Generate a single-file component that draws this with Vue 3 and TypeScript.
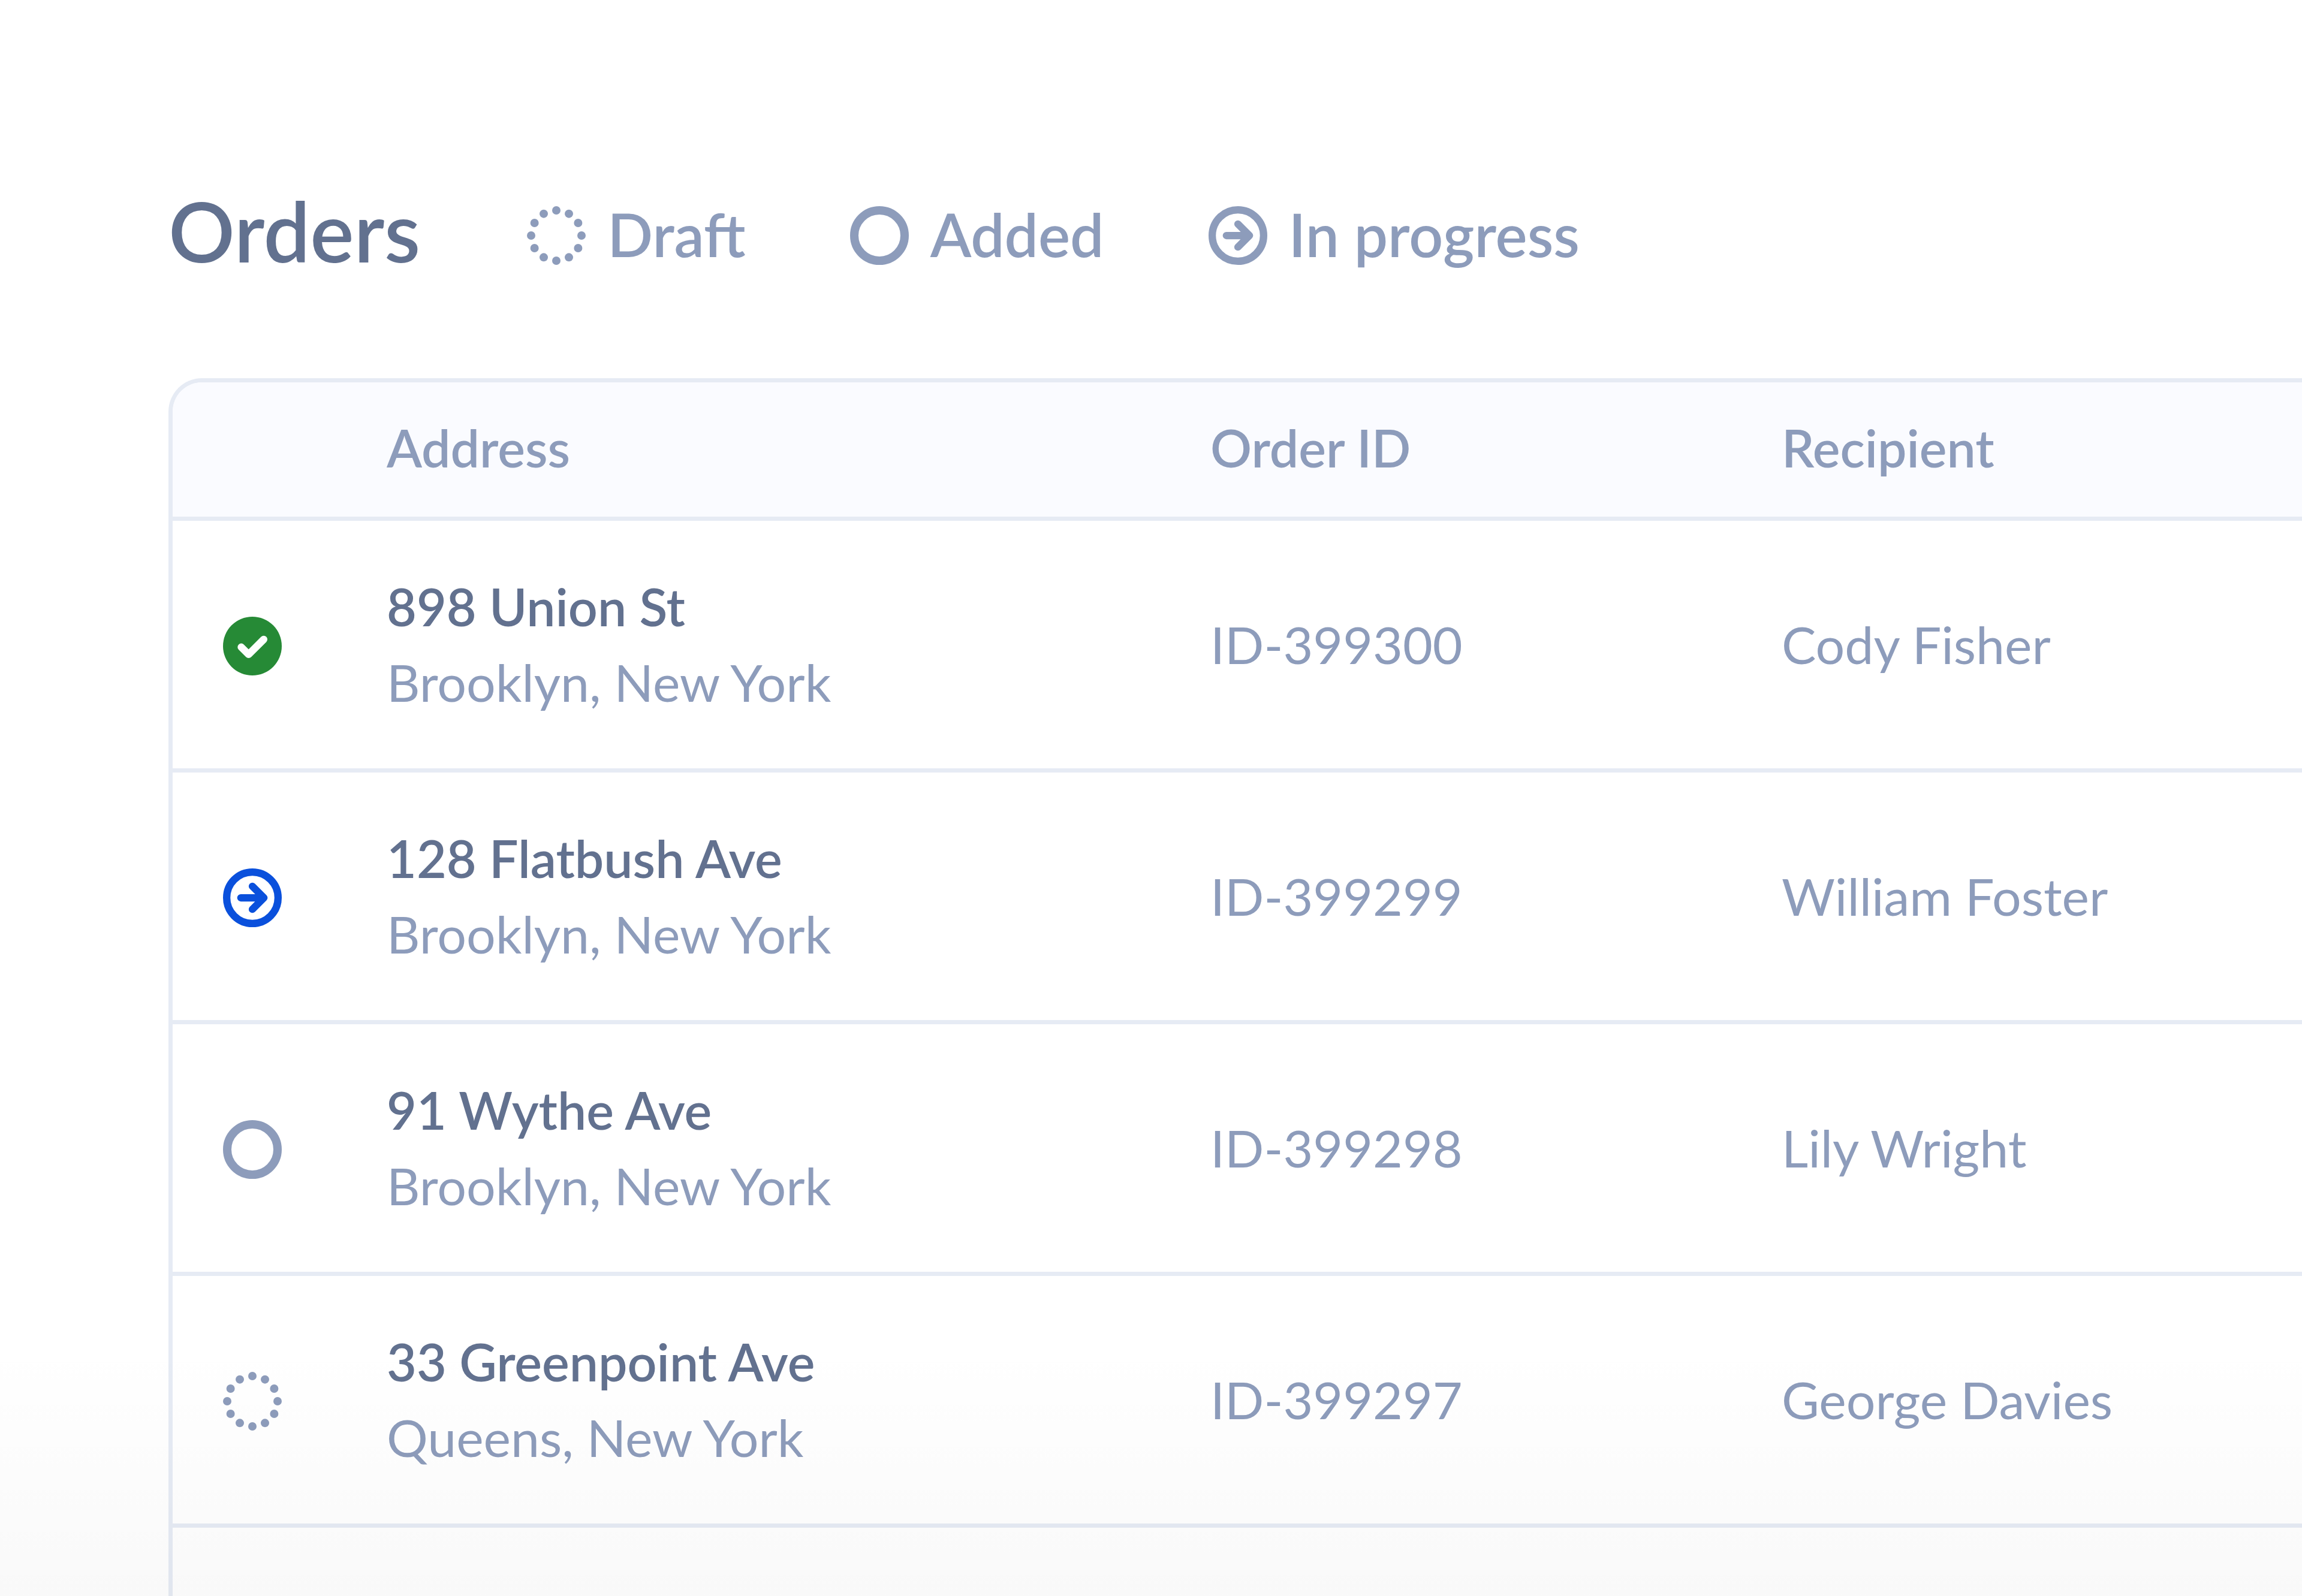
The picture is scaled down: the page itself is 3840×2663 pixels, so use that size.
<script setup lang="ts">
import { computed, defineComponent, h } from 'vue'

type Status = 'draft' | 'added' | 'progress' | 'done'

interface Order {
  id: string
  street: string
  city: string
  recipient: string
  status: Status
}

const legend: { status: Status; label: string }[] = [
  { status: 'draft', label: 'Draft' },
  { status: 'added', label: 'Added' },
  { status: 'progress', label: 'In progress' },
]

const orders: Order[] = [
  { id: 'ID-399300', street: '898 Union St', city: 'Brooklyn, New York', recipient: 'Cody Fisher', status: 'done' },
  { id: 'ID-399299', street: '128 Flatbush Ave', city: 'Brooklyn, New York', recipient: 'William Foster', status: 'progress' },
  { id: 'ID-399298', street: '91 Wythe Ave', city: 'Brooklyn, New York', recipient: 'Lily Wright', status: 'added' },
  { id: 'ID-399297', street: '33 Greenpoint Ave', city: 'Queens, New York', recipient: 'George Davies', status: 'draft' },
]

const names: Record<Status, string> = {
  draft: 'Draft',
  added: 'Added',
  progress: 'In progress',
  done: 'Done',
}

// Twelve dots spaced evenly round a circle of radius 6
const dots = Array.from({ length: 12 }, (_, i) => {
  const angle = (i * Math.PI) / 6
  return { cx: 7 + 6 * Math.cos(angle), cy: 7 + 6 * Math.sin(angle) }
})

const StatusIcon = defineComponent({
  props: { status: { type: String, required: true }, label: { type: String, default: '' } },
  setup(props) {
    const shapes = computed(() => {
      const line = { fill: 'none', 'stroke-linecap': 'round', 'stroke-linejoin': 'round', 'stroke-width': 1.75 }
      if (props.status === 'draft') return dots.map((d) => h('circle', { ...d, r: 1, fill: 'currentColor' }))
      if (props.status === 'added')
        return [h('circle', { cx: 7, cy: 7, r: 6, fill: 'none', stroke: 'currentColor', 'stroke-width': 2 })]
      if (props.status === 'progress')
        return [
          h('circle', { ...line, cx: 7, cy: 7, r: 6.125, stroke: 'currentColor' }),
          h('path', { ...line, d: 'M4.25 7H9.7M7 4.25L9.75 7L7 9.75', stroke: 'currentColor' }),
        ]
      return [
        h('circle', { cx: 7, cy: 7, r: 7, fill: 'currentColor' }),
        h('path', { ...line, d: 'M4.35 7.25L6.1 9L9.7 5.4', stroke: '#fff' }),
      ]
    })
    return () =>
      h(
        'svg',
        props.label ? { viewBox: '0 0 14 14', role: 'img', 'aria-label': props.label } : { viewBox: '0 0 14 14', 'aria-hidden': 'true' },
        shapes.value,
      )
  },
})
</script>

<template>
  <main class="page">
    <header class="top">
      <h1>Orders</h1>
      <ul class="legend">
        <li v-for="item in legend" :key="item.status">
          <StatusIcon class="icon" :status="item.status" />
          <span class="label">{{ item.label }}</span>
        </li>
      </ul>
    </header>

    <table class="orders">
      <colgroup>
        <col class="col-status" />
        <col class="col-address" />
        <col class="col-id" />
        <col />
      </colgroup>
      <thead>
        <tr>
          <th scope="col" aria-label="Status"></th>
          <th scope="col">Address</th>
          <th scope="col">Order ID</th>
          <th scope="col">Recipient</th>
        </tr>
      </thead>
      <tbody>
        <tr v-for="order in orders" :key="order.id">
          <td class="status">
            <StatusIcon class="icon" :class="order.status" :status="order.status" :label="names[order.status]" />
          </td>
          <td>
            <div class="street">{{ order.street }}</div>
            <div>{{ order.city }}</div>
          </td>
          <td>{{ order.id }}</td>
          <td>{{ order.recipient }}</td>
        </tr>
        <tr>
          <td colspan="4"></td>
        </tr>
      </tbody>
    </table>
  </main>
</template>

<style>
body {
  background: #fff;
}
</style>

<style scoped>
.page {
  position: relative;
  box-sizing: border-box;
  height: 100vh;
  overflow: hidden;
  padding: 296px 0 0 281px;
  font-family: Lato, 'Liberation Sans', sans-serif;
  color: #8d9cbb;
}

/* Soft shade rising from the bottom edge */
.page::after {
  content: '';
  position: absolute;
  inset: 84% 0 0;
  background: linear-gradient(rgba(0, 0, 0, 0), rgba(0, 0, 0, 0.025));
  pointer-events: none;
}

.top {
  display: flex;
  align-items: center;
  gap: 178px;
  height: 194px;
  margin-bottom: 141px;
}

h1 {
  margin: 0;
  padding-bottom: 16px;
  font-size: 138px;
  line-height: 160px;
  font-weight: 600;
  color: #62718f;
}

.legend {
  display: flex;
  gap: 174px;
  margin: 0;
  padding: 0;
  list-style: none;
  font-size: 100px;
  line-height: 128px;
  font-weight: 600;
}

.legend li {
  display: flex;
  align-items: center;
  gap: 36px;
  white-space: nowrap;
}

.label {
  padding-bottom: 6px;
}

.icon {
  display: block;
  width: 98px;
  height: 98px;
}

.orders {
  width: 100%;
  table-layout: fixed;
  border-collapse: separate;
  border-spacing: 0;
  border: solid #e6ebf4;
  border-width: 7px 0 0 7px;
  border-top-left-radius: 56px;
  font-size: 86px;
  line-height: 126px;
}

.col-status {
  width: 357px;
}

.col-address {
  width: 1374px;
}

.col-id {
  width: 953px;
}

th,
td {
  box-sizing: border-box;
  border-bottom: 7px solid #e6ebf4;
  text-align: left;
  vertical-align: middle;
  white-space: nowrap;
}

th {
  height: 231px;
  padding: 0 0 6px;
  background: #fafbff;
  font-weight: 600;
}

th:first-child {
  border-top-left-radius: 49px;
}

td {
  height: 420px;
  padding: 0 0 2px;
}

.status {
  padding: 4px 0 0 84px;
}

.street {
  font-weight: 600;
  color: #62718f;
}

.done {
  color: #268a36;
}

.progress {
  color: #0a50dc;
}
</style>
